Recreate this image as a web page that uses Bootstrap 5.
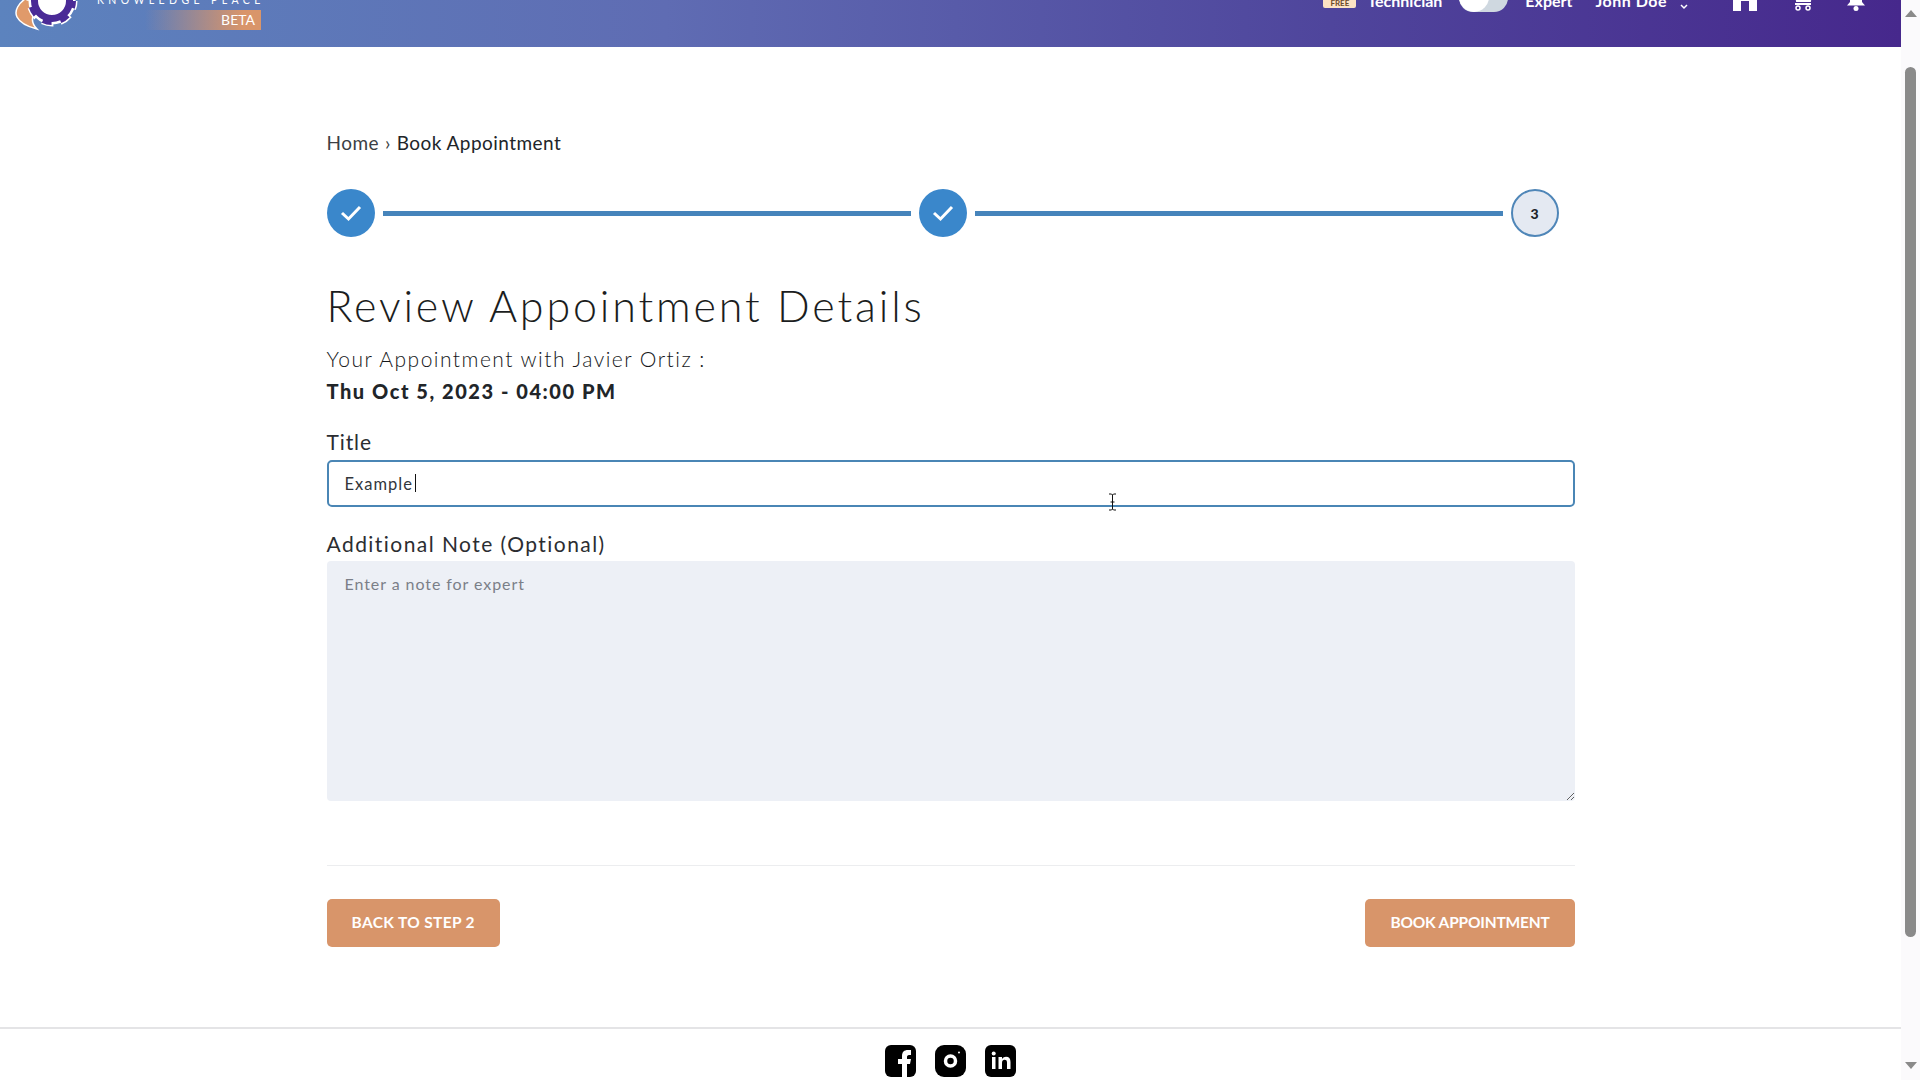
<!DOCTYPE html>
<html lang="en">
<head>
    <meta charset="UTF-8">
    <meta name="viewport" content="width=device-width, initial-scale=1.0">
    <title>Book Appointment</title>
    <link href="https://cdn.jsdelivr.net/npm/bootstrap@5.3.0/dist/css/bootstrap.min.css" rel="stylesheet">
    <style>
        html, body { height: 100%; overflow: hidden; }
        body { font-family: Lato, "Liberation Sans", sans-serif; color: #212529; background: #fff; }
        .page-shell { height: 1080px; }
        .page-main { width: 1901px; height: 1080px; }
        .top-bar {
            height: 47px;
            overflow: hidden;
            background: linear-gradient(90deg, #5c83be 0%, #5f6cb3 35%, #4f459c 70%, #46288c 100%);
            color: #fff;
            font-size: 16px;
            font-weight: 700;
        }
        .brand-logo { width: 80px; height: 47px; }
        .brand-text { width: 164px; margin-left: 17px; margin-bottom: 17px; }
        .brand-name { font-size: 10.5px; font-weight: 400; letter-spacing: 4.4px; line-height: 12px; white-space: nowrap; margin-bottom: 4px; }
        .beta-tag {
            width: 116px; height: 20px; margin-left: auto; padding-right: 6px;
            background: linear-gradient(90deg, rgba(217,149,106,0) 0%, #d9956a 85%);
            font-size: 14px; font-weight: 400; line-height: 20px; text-align: right;
        }
        .top-right { margin-left: auto; padding-right: 35px; line-height: 20px; }
        .top-text { margin-bottom: 36px; }
        .free-tag { width: 33px; height: 20px; margin-bottom: 39px; background: #fde3c4; color: #6b4a2a; border-radius: 2px; font-size: 8px; text-align: center; line-height: 30px; }
        .tech-label { margin-left: 11px; }
        .fake-toggle { width: 49px; height: 30px; margin: 0 17px 35px; border-radius: 14px; background: #cfd8e0; }
        .fake-toggle span { display: block; width: 30px; height: 30px; border-radius: 50%; background: #fff; }
        .name-label { margin-left: 23px; letter-spacing: .5px; }
        .name-caret { margin: 0 45px 36px 13px; }
        .top-icon { display: block; margin-bottom: 36px; }
        .cart-icon { margin-left: 36px; margin-right: 33px; }
        .scroll-rail { width: 19px; background: #fbfafc; }
        .scroll-arrow-up { width: 0; height: 0; margin: 10px auto 0; border: 6px solid transparent; border-top: 0; border-bottom: 7px solid #8a8a8a; }
        .scroll-thumb { width: 11px; height: 870px; margin: 50px auto 0 4px; background: #8a8a8a; border-radius: 6px; }
        .scroll-arrow-down { width: 0; height: 0; margin: 125px auto 0; border: 6px solid transparent; border-bottom: 0; border-top: 7px solid #8a8a8a; }
        .content-box { width: 1248px; height: 980px; padding-top: 84px; }
        .crumbs { font-size: 19px; letter-spacing: .45px; line-height: 24px; margin-bottom: 34px; }
        .crumbs a { color: #3b3f45; text-decoration: none; }
        .crumb-sep { margin: 0 6px; color: #3b3f45; }
        .step-done { width: 48px; height: 48px; background: #3a87cb; border-radius: 50%; flex: none; }
        .step-line { width: 528px; height: 5px; margin: 0 8px; background: #4684bb; flex: none; }
        .step-now { width: 48px; height: 48px; background: #e4e9f2; border: 2px solid #4f86b8; border-radius: 50%; font-size: 14px; font-weight: 900; flex: none; }
        .main-heading { font-size: 43px; font-weight: 300; letter-spacing: 2.85px; line-height: 52px; margin: 43px 0 0; color: #1b1d20; }
        .sub-line { font-size: 21px; font-weight: 300; letter-spacing: 1.47px; line-height: 28px; margin: 13px 0 0; color: #15171a; }
        .when-line { font-size: 20px; font-weight: 900; letter-spacing: 1.55px; line-height: 28px; margin: 4px 0 0; }
        .field-label { font-size: 21px; font-weight: 400; letter-spacing: 1.45px; line-height: 28px; color: #2b2d31; }
        .title-label { margin: 0 0 4px; letter-spacing: .9px; }
        .note-label { margin: 0 0 3px; }
        .title-field { margin-top: 23px; }
        .note-field { margin-top: 23px; }
        .title-input.form-control { height: 47px; padding: 0 16px; border: 2px solid #4a86b5; border-radius: 5px; font-size: 16.500px; letter-spacing: 1px; color: #33363b; box-shadow: none; }
        .text-caret { position: absolute; left: 88px; top: 14px; width: 1px; height: 18px; background: #111; }
        .mouse-beam { position: absolute; left: 781px; top: 33px; }
        .note-input.form-control { height: 240px; padding: 11px 18px; border: 0; border-radius: 4px; background: #edf0f6; font-size: 16px; letter-spacing: .93px; }
        .note-input.form-control::placeholder { color: #7b7f88; opacity: 1; }
        .form-rule { height: 1px; margin: 64px 0 33px; background: #ecedef; }
        .action-btn.btn { height: 48px; padding: 0 25px; background: #d8956a; border: 0; border-radius: 5px; color: #fff; font-size: 15.500px; font-weight: 700; }
        .back-btn.btn { letter-spacing: .35px; }
        .book-btn.btn { letter-spacing: -.2px; }
        .site-foot { height: 53px; border-top: 2px solid #e4e4e6; padding-top: 15px; }
        .foot-icon { display: block; }
    </style>
</head>
<body>
<div class="page-shell d-flex">
    <div class="page-main">
        
        <header class="top-bar d-flex align-items-end">
            <svg class="brand-logo flex-shrink-0" viewBox="0 0 80 47" aria-hidden="true">
                <path d="M28 -3 C18 3 14 11 17 17 C20 23 29 27 37 29 C32 24 31 18 35 12 C38 7 44 2 50 -3 Z" fill="#e09a6a" stroke="#fff" stroke-width="1.500"/>
                <circle cx="52" cy="1" r="18" fill="#fff"/>
                <circle cx="52" cy="1" r="19" fill="none" stroke="#fff" stroke-width="9"/>
                <circle cx="52" cy="1" r="22" fill="none" stroke="#fff" stroke-width="7" stroke-dasharray="11 7" stroke-dashoffset="3"/>
                <circle cx="52" cy="1" r="17.500" fill="none" stroke="#4a2a96" stroke-width="7"/>
                <circle cx="52" cy="1" r="21.500" fill="none" stroke="#4a2a96" stroke-width="5" stroke-dasharray="9 9" stroke-dashoffset="2"/>
            </svg>
            <div class="brand-text flex-shrink-0">
                <div class="brand-name">KNOWLEDGE PLACE</div>
                <div class="beta-tag">BETA</div>
            </div>
            <div class="top-right d-flex align-items-end">
                <div class="free-tag">FREE</div>
                <span class="top-text tech-label">Technician</span>
                <div class="fake-toggle d-flex"><span></span></div>
                <span class="top-text">Expert</span>
                <span class="top-text name-label">John Doe</span>
                <svg class="name-caret" width="8" height="8" viewBox="0 0 8 8"><path d="M1 2 L4 5 L7 2" fill="none" stroke="#fff" stroke-width="1.500"/></svg>
                <svg class="top-icon" width="24" height="30" viewBox="0 0 24 30"><path d="M12 0 L24 10 L24 30 L16 30 L16 20 L8 20 L8 30 L0 30 L0 10 Z" fill="#fff"/></svg>
                <svg class="top-icon cart-icon" width="20" height="26" viewBox="0 0 20 26"><path d="M2 6 H19 L17 16 H4 Z M2 19 H18" fill="none" stroke="#fff" stroke-width="2"/><circle cx="5" cy="23" r="2" fill="none" stroke="#fff" stroke-width="1.500"/><circle cx="15" cy="23" r="2" fill="none" stroke="#fff" stroke-width="1.500"/></svg>
                <svg class="top-icon" width="20" height="26" viewBox="0 0 20 26"><path d="M10 0 C5 0 4 5 4 10 V17 L1 20.500 H19 L16 17 V10 C16 5 15 0 10 0 Z" fill="#fff"/><circle cx="10" cy="23.500" r="2.500" fill="#fff"/></svg>
            </div>
        </header>

        <main class="content-box mx-auto">
            <div class="crumbs"><a href="#">Home</a><span class="crumb-sep">›</span><span>Book Appointment</span></div>

            <div class="d-flex align-items-center">
                <div class="step-done d-flex align-items-center justify-content-center">
                    <svg width="22" height="18" viewBox="0 0 22 18"><path d="M2 9 L8.500 15 L20 3" fill="none" stroke="#fff" stroke-width="3"/></svg>
                </div>
                <div class="step-line"></div>
                <div class="step-done d-flex align-items-center justify-content-center">
                    <svg width="22" height="18" viewBox="0 0 22 18"><path d="M2 9 L8.500 15 L20 3" fill="none" stroke="#fff" stroke-width="3"/></svg>
                </div>
                <div class="step-line"></div>
                <div class="step-now d-flex align-items-center justify-content-center">3</div>
            </div>

            <h1 class="main-heading">Review Appointment Details</h1>
            <p class="sub-line">Your Appointment with Javier Ortiz :</p>
            <p class="when-line">Thu Oct 5, 2023 - 04:00 PM</p>

            <form>
                <div class="title-field">
                    <label class="field-label title-label d-block" for="title">Title</label>
                    <div class="position-relative">
                        <input id="title" class="form-control title-input" type="text" value="Example">
                        <span class="text-caret"></span>
                        <svg class="mouse-beam" width="9" height="18" viewBox="0 0 9 18"><path d="M1 1 H3.500 L4.500 2 L5.500 1 H8 M4.500 2 V16 M1 17 H3.500 L4.500 16 L5.500 17 H8 M2.500 9 H6.500" fill="none" stroke="#111" stroke-width="1"/></svg>
                    </div>
                </div>
                <div class="note-field">
                    <label class="field-label note-label d-block" for="note">Additional Note (Optional)</label>
                    <textarea id="note" class="form-control note-input" placeholder="Enter a note for expert"></textarea>
                </div>
                <div class="form-rule"></div>
                <div class="d-flex justify-content-between">
                    <button type="button" class="btn action-btn back-btn">BACK TO STEP 2</button>
                    <button type="button" class="btn action-btn book-btn">BOOK APPOINTMENT</button>
                </div>
            </form>
        </main>

        <footer class="site-foot d-flex justify-content-center gap-3">
            <svg class="foot-icon" width="34" height="34" viewBox="0 0 34 34"><rect x="1" y="1" width="31" height="32" rx="6" fill="#000"/><path d="M18 33 V20 H14 V15 H18 V12 C18 8 20 6 24 6 H27 V11 H25 C23.500 11 23 12 23 13 V15 H27 L26 20 H23 V33 Z" fill="#fff"/></svg>
            <svg class="foot-icon" width="34" height="34" viewBox="0 0 34 34"><rect x="1" y="1" width="31" height="32" rx="9" fill="#000"/><circle cx="16.500" cy="17" r="5" fill="none" stroke="#fff" stroke-width="3.500"/><circle cx="25" cy="8.500" r="1" fill="#fff"/></svg>
            <svg class="foot-icon" width="34" height="34" viewBox="0 0 34 34"><rect x="1" y="1" width="31" height="32" rx="6" fill="#000"/><rect x="8" y="13" width="3.500" height="12" fill="#fff"/><circle cx="9.700" cy="9.500" r="2" fill="#fff"/><path d="M14.500 13 H18 V15 C19 13.500 20.500 12.800 22 12.800 C25 12.800 26.500 14.500 26.500 18 V25 H23 V18.500 C23 16.500 22 15.800 20.700 15.800 C19 15.800 18 17 18 19 V25 H14.500 Z" fill="#fff"/></svg>
        </footer>
    </div>
    <div class="scroll-rail flex-shrink-0">
        <div class="scroll-arrow-up"></div>
        <div class="scroll-thumb"></div>
        <div class="scroll-arrow-down"></div>
    </div>
</div>
<script src="https://cdn.jsdelivr.net/npm/bootstrap@5.3.0/dist/js/bootstrap.bundle.min.js"></script>
</body>
</html>
